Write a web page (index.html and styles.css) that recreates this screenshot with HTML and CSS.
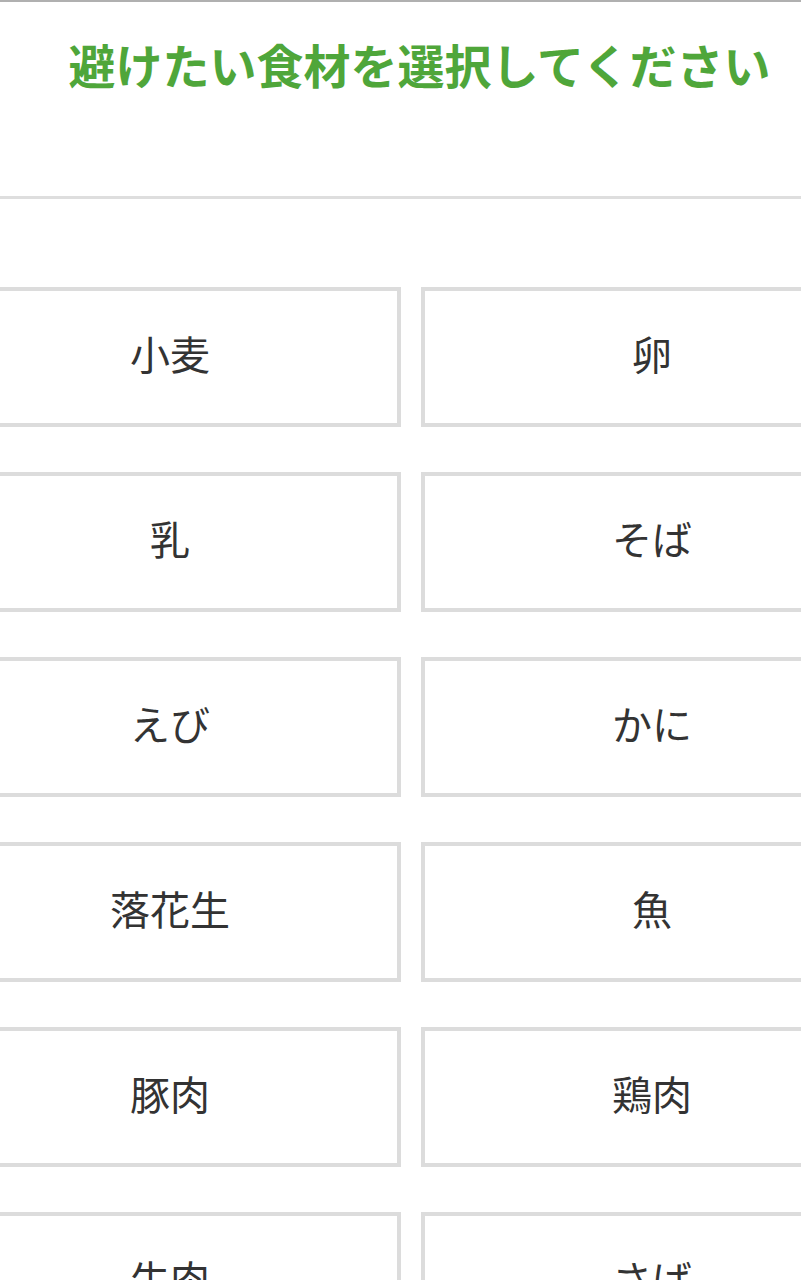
FILE: index.html
```html
<!DOCTYPE html>
<html lang="ja">
<head>
    <meta charset="UTF-8">
    <meta name="viewport" content="width=device-width, initial-scale=1.0">
    <title>避けたい食材</title>
    <link rel="stylesheet" href="styles.css">
</head>
<body>
    <div class="page">
        <header class="title-bar">
            <h1>避けたい食材を選択してください</h1>
        </header>
        <div class="food-grid">
            <button class="food">小麦</button>
            <button class="food">卵</button>
            <button class="food">乳</button>
            <button class="food">そば</button>
            <button class="food">えび</button>
            <button class="food">かに</button>
            <button class="food">落花生</button>
            <button class="food">魚</button>
            <button class="food">豚肉</button>
            <button class="food">鶏肉</button>
            <button class="food">牛肉</button>
            <button class="food">さば</button>
        </div>
    </div>
</body>
</html>
```

FILE: styles.css
```css
html, body {
    margin: 0;
    padding: 0;
    overflow: hidden;
}
body {
    font-family: "Noto Sans CJK JP", "Noto Sans", sans-serif;
    background: #fff;
    border-top: 2px solid #b0b0b0;
    height: 1278px;
}
.page {
    width: 801px;
}
.title-bar {
    height: 194px;
    border-bottom: 3px solid #dedede;
    display: flex;
    justify-content: center;
}
.title-bar h1 {
    margin: 34px 0 0 38px;
    font-size: 47px;
    line-height: 56px;
    font-weight: 700;
    color: #4fa63a;
    letter-spacing: 0;
}
.food-grid {
    margin: 88px 0 0 -61px;
    width: 944px;
    display: grid;
    grid-template-columns: 462px 462px;
    column-gap: 20px;
    row-gap: 45px;
}
.food {
    height: 140px;
    box-sizing: border-box;
    border: 4px solid #dcdcdc;
    background: #fff;
    font-family: inherit;
    font-size: 40px;
    color: #333;
    padding: 0 0 8px;
    cursor: pointer;
}
```
